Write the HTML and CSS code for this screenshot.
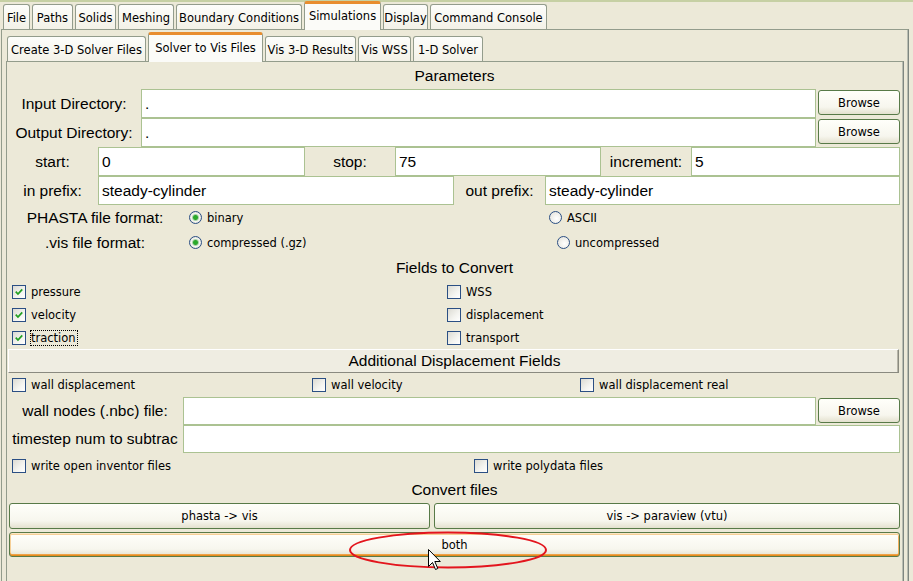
FILE: index.html
```html
<!DOCTYPE html>
<html>
<head>
<meta charset="utf-8">
<title>Solver to Vis Files</title>
<link rel="stylesheet" href="styles.css">
</head>
<body>
<div class="app">
  <div class="topline"></div>
  <div class="tabs tabs-main">
    <div class="tab w-file">File</div>
    <div class="tab w-paths">Paths</div>
    <div class="tab w-solids">Solids</div>
    <div class="tab w-mesh">Meshing</div>
    <div class="tab w-bc">Boundary Conditions</div>
    <div class="tab sel w-sim">Simulations</div>
    <div class="tab w-disp">Display</div>
    <div class="tab w-cmd">Command Console</div>
  </div>
  <div class="panel outer">
    <div class="tabs tabs-sub">
      <div class="tab w-create">Create 3-D Solver Files</div>
      <div class="tab sel w-s2v">Solver to Vis Files</div>
      <div class="tab w-vis3d">Vis 3-D Results</div>
      <div class="tab w-wss">Vis WSS</div>
      <div class="tab w-1d">1-D Solver</div>
    </div>
    <div class="panel inner">
      <div class="heading h-params">Parameters</div>

      <div class="row-dir">
        <div class="lbl">Input Directory:</div>
        <div class="entry">.</div>
        <div class="btn browse">Browse</div>
      </div>
      <div class="row-dir">
        <div class="lbl">Output Directory:</div>
        <div class="entry">.</div>
        <div class="btn browse">Browse</div>
      </div>

      <div class="row-range">
        <div class="lbl">start:</div>
        <div class="entry">0</div>
        <div class="lbl">stop:</div>
        <div class="entry">75</div>
        <div class="lbl">increment:</div>
        <div class="entry">5</div>
      </div>
      <div class="row-prefix">
        <div class="lbl">in prefix:</div>
        <div class="entry">steady-cylinder</div>
        <div class="lbl">out prefix:</div>
        <div class="entry">steady-cylinder</div>
      </div>

      <div class="row-radio">
        <div class="lbl">PHASTA file format:</div>
        <div class="opt"><span class="radio on"></span><span>binary</span></div>
        <div class="opt opt-ascii"><span class="radio"></span><span>ASCII</span></div>
      </div>
      <div class="row-radio">
        <div class="lbl">.vis file format:</div>
        <div class="opt"><span class="radio on"></span><span>compressed (.gz)</span></div>
        <div class="opt opt-unc"><span class="radio"></span><span>uncompressed</span></div>
      </div>

      <div class="heading h-fields">Fields to Convert</div>

      <div class="row-check">
        <div class="opt"><span class="cb"><svg viewBox="0 0 14 14" class="tick"><path d="M3.2 6.6 L5.8 9.3 L10.8 3.9"/></svg></span><span>pressure</span></div>
        <div class="opt"><span class="cb"></span><span>WSS</span></div>
      </div>
      <div class="row-check">
        <div class="opt"><span class="cb"><svg viewBox="0 0 14 14" class="tick"><path d="M3.2 6.6 L5.8 9.3 L10.8 3.9"/></svg></span><span>velocity</span></div>
        <div class="opt"><span class="cb"></span><span>displacement</span></div>
      </div>
      <div class="row-check">
        <div class="opt"><span class="cb"><svg viewBox="0 0 14 14" class="tick"><path d="M3.2 6.6 L5.8 9.3 L10.8 3.9"/></svg></span><span class="focus">traction</span></div>
        <div class="opt"><span class="cb"></span><span>transport</span></div>
      </div>

      <div class="bar">Additional Displacement Fields</div>

      <div class="row-wall">
        <div class="opt"><span class="cb"></span><span>wall displacement</span></div>
        <div class="opt"><span class="cb"></span><span>wall velocity</span></div>
        <div class="opt"><span class="cb"></span><span>wall displacement real</span></div>
      </div>

      <div class="row-nbc">
        <div class="lbl">wall nodes (.nbc) file:</div>
        <div class="entry"></div>
        <div class="btn browse">Browse</div>
      </div>
      <div class="row-ts">
        <div class="lbl">timestep num to subtrac</div>
        <div class="entry"></div>
      </div>

      <div class="row-write">
        <div class="opt"><span class="cb"></span><span>write open inventor files</span></div>
        <div class="opt"><span class="cb"></span><span>write polydata files</span></div>
      </div>

      <div class="heading h-convert">Convert files</div>

      <div class="row-buttons">
        <div class="btn">phasta -&gt; vis</div>
        <div class="btn">vis -&gt; paraview (vtu)</div>
      </div>
      <div class="row-both">
        <div class="btn hot">both</div>
      </div>
    </div>
  </div>

  <svg class="overlay" width="913" height="581" viewBox="0 0 913 581">
    <ellipse cx="448" cy="550" rx="98" ry="17.5" fill="none" stroke="#e3151d" stroke-width="2"/>
    <path class="cursor" d="M428.5 549.5 L428.5 566.5 L432.5 562.5 L435.5 569.5 L437.8 568.5 L434.8 561.5 L440.3 561.5 Z"/>
  </svg>
</div>
</body>
</html>
```

FILE: styles.css
```css
* { box-sizing: border-box; }

html, body {
  margin: 0;
  padding: 0;
}

body {
  width: 913px;
  height: 581px;
  overflow: hidden;
  background: #ece9d8;
  color: #000;
  font-family: "DejaVu Sans", "Verdana", sans-serif;
  font-size: 11.5px;
}

.app {
  position: relative;
  width: 913px;
  height: 581px;
  overflow: hidden;
}

.topline {
  height: 2px;
  background: #c6d0a4;
}

/* ---------- tabs ---------- */
.tabs {
  display: flex;
  align-items: flex-end;
}

.tabs-main {
  height: 27px;
  padding-left: 3px;
}

.tabs-sub {
  height: 31px;
  padding-left: 5px;
}

.tab {
  flex: none;
  height: 25px;
  margin-right: 2px;
  border: 1px solid #939c8c;
  border-bottom: none;
  border-radius: 3px 3px 0 0;
  background: linear-gradient(#fdfdfb, #f3f1e7);
  display: flex;
  align-items: center;
  justify-content: center;
  white-space: nowrap;
  padding-top: 1px;
}

.tab.sel {
  position: relative;
  z-index: 1;
  height: 29px;
  margin-bottom: -1px;
  background: #fbfbf8;
  border-top: 3px solid #e88d2f;
  padding-top: 0;
  padding-bottom: 2px;
}

.tabs-sub .tab.sel { height: 30px; }

.w-file { width: 27px; }
.w-paths { width: 41px; }
.w-solids { width: 41px; }
.w-mesh { width: 56px; }
.w-bc { width: 126px; }
.w-sim { width: 77px; }
.w-disp { width: 45px; }
.w-cmd { width: 117px; }

.w-create { width: 139px; }
.w-s2v { width: 115px; }
.w-vis3d { width: 91px; }
.w-wss { width: 53px; }
.w-1d { width: 70px; }

/* ---------- panels ---------- */
.panel {
  border-top: 1px solid #939c8c;
  border-left: 1px solid #939c8c;
  border-right: 1px solid #7e8680;
  box-shadow: inset -1px 0 0 #b9bdb2;
}

.outer {
  margin-left: 1px;
  width: 908px;
  height: 560px;
}

.inner {
  margin-left: 4px;
  width: 898px;
  height: 530px;
  padding-right: 3px;
}

/* ---------- text helpers ---------- */
.heading,
.lbl,
.entry,
.bar {
  font-family: "Liberation Sans", "Arial", sans-serif;
  font-size: 15.5px;
}

.heading {
  text-align: center;
  padding-left: 2px;
}

.h-params { height: 27px; line-height: 27px; }
.h-fields { height: 25px; line-height: 25px; }
.h-convert { height: 24px; line-height: 24px; }

.lbl {
  display: flex;
  align-items: center;
  justify-content: center;
  white-space: nowrap;
  overflow: hidden;
}

.entry {
  background: #fff;
  border: 1px solid #abc292;
  display: flex;
  align-items: center;
  padding-left: 3px;
  white-space: nowrap;
}

/* ---------- rows ---------- */
.row-dir {
  display: grid;
  grid-template-columns: 134px 1fr 84px;
  height: 29px;
  align-items: stretch;
}

.row-range {
  display: grid;
  grid-template-columns: 91px 207px 90px 206px 90px 1fr;
  height: 29px;
}

.row-prefix {
  display: grid;
  grid-template-columns: 91px 356px 91px 1fr;
  height: 29px;
}

.row-radio {
  display: grid;
  grid-template-columns: 176px 359px 1fr;
  height: 25px;
  align-items: center;
}

.row-radio .opt:nth-child(2) { padding-left: 6px; }
.opt-ascii { padding-left: 7px; }
.opt-unc { padding-left: 15px; }

.row-check {
  display: grid;
  grid-template-columns: 435px 1fr;
  padding-left: 5px;
  height: 23px;
  align-items: center;
}

.row-wall {
  display: grid;
  grid-template-columns: 300px 268px 1fr;
  padding-left: 5px;
  height: 24px;
  align-items: center;
}

.row-nbc {
  display: grid;
  grid-template-columns: 176px 1fr 84px;
  height: 28px;
}

.row-ts {
  display: grid;
  grid-template-columns: 176px 1fr;
  height: 28px;
}

.row-write {
  display: grid;
  grid-template-columns: 462px 1fr;
  padding-left: 5px;
  height: 25px;
  align-items: center;
}

.row-buttons {
  display: grid;
  grid-template-columns: 421px 1fr;
  column-gap: 4px;
  height: 26px;
  margin-top: 1px;
  padding-left: 2px;
}

.row-both {
  display: grid;
  height: 25px;
  margin-top: 3px;
  padding-left: 2px;
}

/* ---------- widgets ---------- */
.opt {
  display: flex;
  align-items: center;
  white-space: nowrap;
}

.cb {
  flex: none;
  width: 14px;
  height: 14px;
  margin-right: 5px;
  border: 1px solid #2b4f84;
  background: linear-gradient(135deg, #dcdbd3, #f4f4f0 60%, #fff);
  display: flex;
  align-items: center;
  justify-content: center;
}

.tick {
  width: 12px;
  height: 12px;
}

.tick path {
  fill: none;
  stroke: #22a022;
  stroke-width: 2;
}

.radio {
  flex: none;
  width: 13px;
  height: 13px;
  margin-right: 5px;
  border: 1px solid #2b4f84;
  border-radius: 50%;
  background: radial-gradient(circle at 60% 60%, #ffffff, #e1e0d8);
}

.radio.on {
  background: radial-gradient(circle, #24b024 0, #2fa52f 2px, #a9d6a9 3px, #f6f6f2 4px, #e1e0d8 6px);
}

.focus {
  outline: 1px dotted #000;
  outline-offset: 0;
  padding: 0 1px 0 0;
}

.bar {
  height: 24px;
  margin: 0 1px 0 1px;
  border-top: 1px solid #fff;
  border-left: 1px solid #fff;
  border-bottom: 1px solid #8a8a80;
  border-right: 1px solid #8a8a80;
  box-shadow: inset -1px 0 0 #b7b5a8;
  background: #efede2;
  text-align: center;
  line-height: 22px;
  padding-left: 2px;
}

.btn {
  border: 1px solid #587a48;
  border-radius: 3px;
  background: linear-gradient(#fffffa, #f7f6ee 70%, #e4e1cf);
  display: flex;
  align-items: center;
  justify-content: center;
  white-space: nowrap;
}

.browse {
  width: 82px;
  height: 25px;
  margin: 1px 0 0 2px;
}

.btn.hot {
  box-shadow:
    inset 0 1px 0 #fbe6c4,
    inset 0 2px 0 #f6cf96,
    inset 0 -1px 0 #e38a1e,
    inset 0 -2px 0 #eea246,
    inset 1px 0 0 #f6cf96,
    inset -1px 0 0 #f0ae5c;
}

/* ---------- overlay ---------- */
.overlay {
  position: absolute;
  left: 0;
  top: 0;
  pointer-events: none;
}

.cursor {
  fill: #fff;
  stroke: #000;
  stroke-width: 1;
  stroke-linejoin: miter;
}
```
